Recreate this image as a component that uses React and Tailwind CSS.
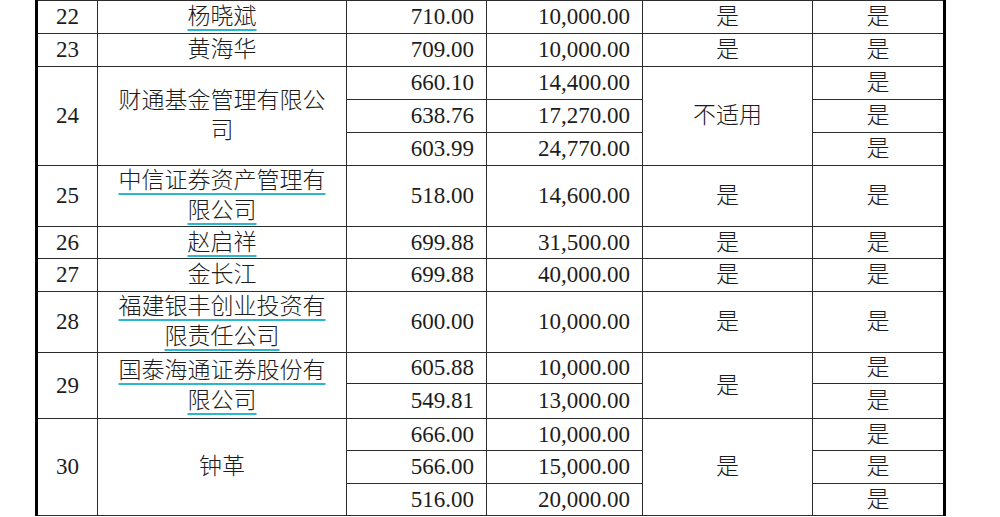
import React from "react";

const cjk = { fontFamily: '"Liberation Serif", "Noto Sans CJK SC", serif' };

const U = ({ children }) => (
  <span className="underline decoration-[#2bb7cf] decoration-2 underline-offset-[5px]">{children}</span>
);

const td = "border border-[#2b2b2b] p-0 align-middle leading-[24px]";
const idx = `${td} text-center border-l-[3px] border-l-black`;
const name = `border border-[#2b2b2b] p-0 align-middle text-center px-4 leading-[30px] font-light`;
const num = `${td} text-right pr-3`;
const yes = `${td} text-center font-light`;
const last = `${td} text-center font-light border-r-[3px] border-r-black`;

export default function App() {
  return (
    <div className="w-[1000px] h-[517px] overflow-hidden bg-white">
      <table
        className="table-fixed border-collapse ml-[35px] text-[23px] text-[#1c1c1c]"
        style={cjk}
      >
        <colgroup>
          <col className="w-[61px]" />
          <col className="w-[249px]" />
          <col className="w-[140px]" />
          <col className="w-[156px]" />
          <col className="w-[170px]" />
          <col className="w-[132px]" />
        </colgroup>
        <tbody>
          <tr className="h-[33px]">
            <td className={idx}>22</td>
            <td className={name}><U>杨晓斌</U></td>
            <td className={num}>710.00</td>
            <td className={num}>10,000.00</td>
            <td className={yes}>是</td>
            <td className={last}>是</td>
          </tr>
          <tr className="h-[33px]">
            <td className={idx}>23</td>
            <td className={name}>黄海华</td>
            <td className={num}>709.00</td>
            <td className={num}>10,000.00</td>
            <td className={yes}>是</td>
            <td className={last}>是</td>
          </tr>
          <tr className="h-[33px]">
            <td className={idx} rowSpan={3}>24</td>
            <td className={name} rowSpan={3}>财通基金管理有限公司</td>
            <td className={num}>660.10</td>
            <td className={num}>14,400.00</td>
            <td className={yes} rowSpan={3}>不适用</td>
            <td className={last}>是</td>
          </tr>
          <tr className="h-[33px]">
            <td className={num}>638.76</td>
            <td className={num}>17,270.00</td>
            <td className={last}>是</td>
          </tr>
          <tr className="h-[33px]">
            <td className={num}>603.99</td>
            <td className={num}>24,770.00</td>
            <td className={last}>是</td>
          </tr>
          <tr className="h-[61px]">
            <td className={idx}>25</td>
            <td className={name}><U>中信证券资产管理有限公司</U></td>
            <td className={num}>518.00</td>
            <td className={num}>14,600.00</td>
            <td className={yes}>是</td>
            <td className={last}>是</td>
          </tr>
          <tr className="h-[32px]">
            <td className={idx}>26</td>
            <td className={name}><U>赵启祥</U></td>
            <td className={num}>699.88</td>
            <td className={num}>31,500.00</td>
            <td className={yes}>是</td>
            <td className={last}>是</td>
          </tr>
          <tr className="h-[33px]">
            <td className={idx}>27</td>
            <td className={name}>金长江</td>
            <td className={num}>699.88</td>
            <td className={num}>40,000.00</td>
            <td className={yes}>是</td>
            <td className={last}>是</td>
          </tr>
          <tr className="h-[61px]">
            <td className={idx}>28</td>
            <td className={name}><U>福建银丰创业投资有限责任公司</U></td>
            <td className={num}>600.00</td>
            <td className={num}>10,000.00</td>
            <td className={yes}>是</td>
            <td className={last}>是</td>
          </tr>
          <tr className="h-[31px]">
            <td className={idx} rowSpan={2}>29</td>
            <td className={name} rowSpan={2}><U>国泰海通证券股份有限公司</U></td>
            <td className={num}>605.88</td>
            <td className={num}>10,000.00</td>
            <td className={yes} rowSpan={2}>是</td>
            <td className={last}>是</td>
          </tr>
          <tr className="h-[35px]">
            <td className={num}>549.81</td>
            <td className={num}>13,000.00</td>
            <td className={last}>是</td>
          </tr>
          <tr className="h-[32px]">
            <td className={idx} rowSpan={3}>30</td>
            <td className={name} rowSpan={3}>钟革</td>
            <td className={num}>666.00</td>
            <td className={num}>10,000.00</td>
            <td className={yes} rowSpan={3}>是</td>
            <td className={last}>是</td>
          </tr>
          <tr className="h-[33px]">
            <td className={num}>566.00</td>
            <td className={num}>15,000.00</td>
            <td className={last}>是</td>
          </tr>
          <tr className="h-[32px]">
            <td className={num}>516.00</td>
            <td className={num}>20,000.00</td>
            <td className={last}>是</td>
          </tr>
        </tbody>
      </table>
    </div>
  );
}
